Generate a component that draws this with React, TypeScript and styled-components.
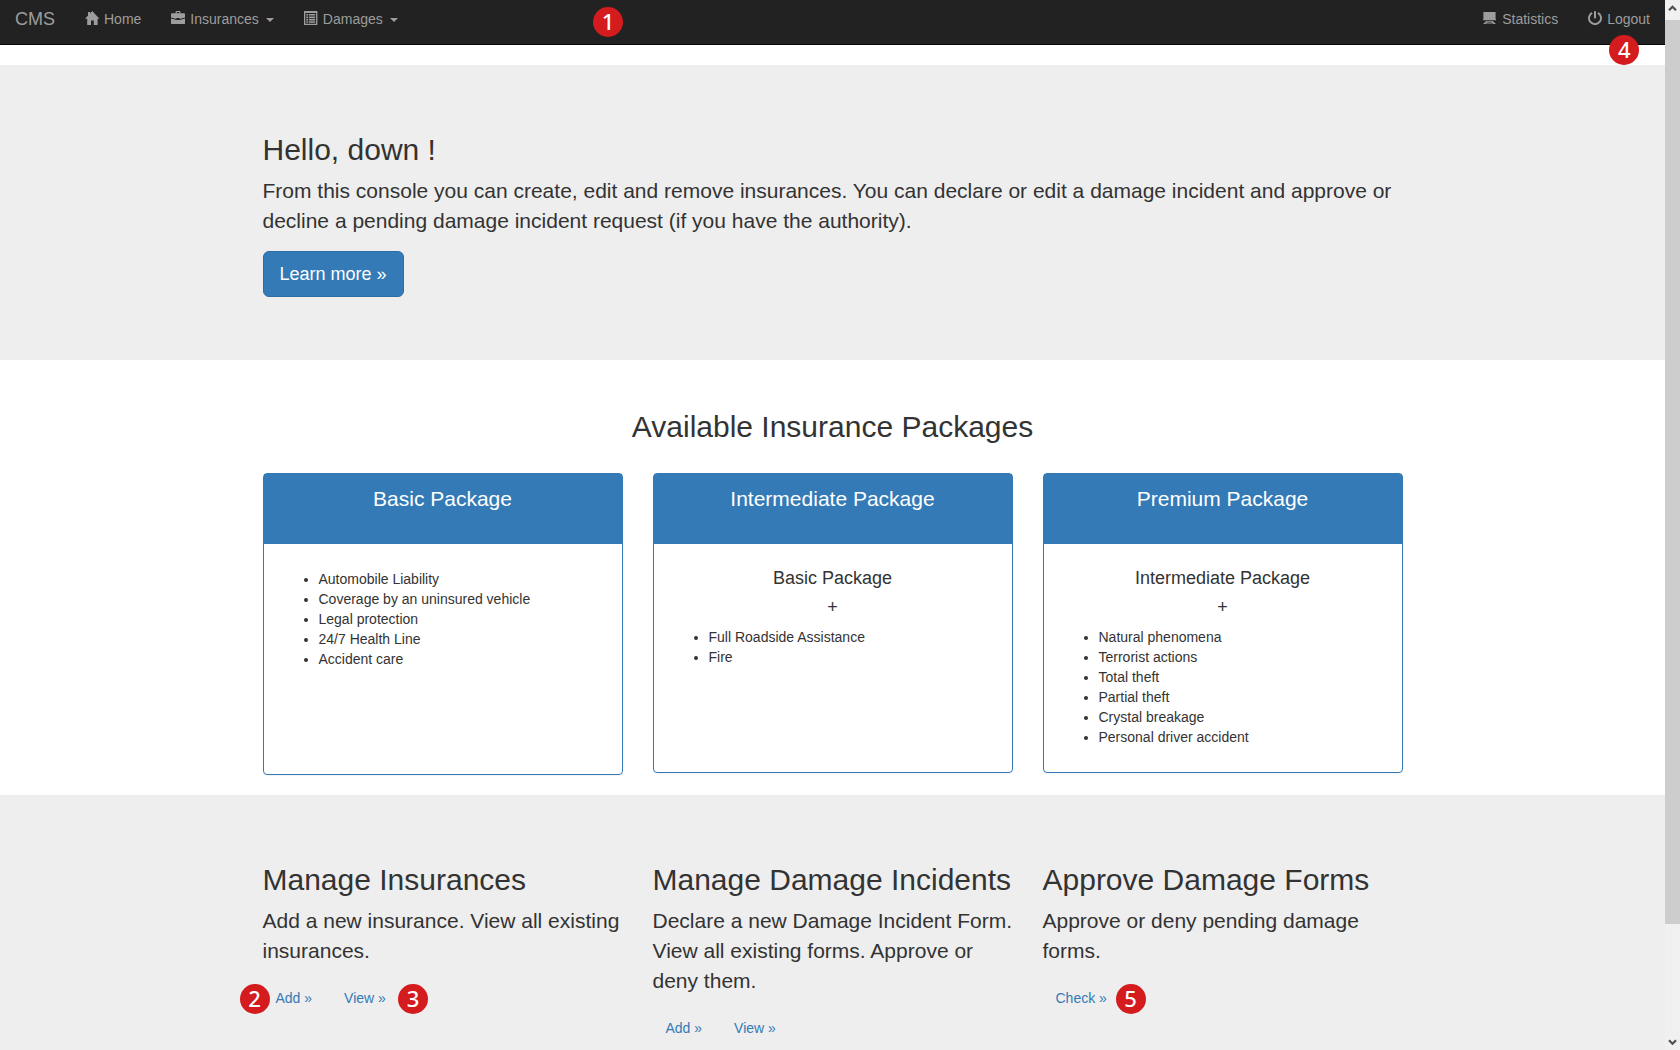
import React from "react";
import styled, { createGlobalStyle } from "styled-components";

const GlobalStyle = createGlobalStyle`
  *, *::before, *::after { box-sizing: border-box; }
  body {
    margin: 0;
    background: #fff;
    color: #333;
    font-family: "Liberation Sans", Arial, sans-serif;
    font-size: 14px;
    line-height: 20px;
  }
`;

const Window = styled.div`
  display: flex;
  height: 100vh;
`;

const Page = styled.div`
  flex: 1;
  min-width: 0;
  overflow-y: auto;
  scrollbar-width: none;
`;

const Scrollbar = styled.div`
  display: flex;
  flex-direction: column;
  flex: none;
  width: 15px;
  background: #f0f0f0;
`;

const ScrollArrow = styled.button`
  display: flex;
  align-items: center;
  justify-content: center;
  height: 16px;
  padding: 0;
  border: 0;
  background: transparent;
  color: #505050;
`;

const ScrollTrack = styled.div`
  display: flex;
  flex-direction: column;
  flex: 1;
  padding-top: 4px;
`;

const ScrollThumb = styled.div`
  height: 89.2%;
  background: #cdcdcd;
`;

const Navbar = styled.nav`
  position: relative;
  display: flex;
  justify-content: space-between;
  height: 45px;
  margin-bottom: 20px;
  background: #222;
  border-bottom: 1px solid #080808;
`;

const NavGroup = styled.div`
  display: flex;
`;

const Brand = styled.a`
  padding: 9px 15px;
  color: #9d9d9d;
  font-size: 18px;
  text-decoration: none;
`;

const NavLink = styled.a`
  position: relative;
  display: flex;
  align-items: flex-start;
  gap: 5px;
  padding: 9px 15px;
  color: #9d9d9d;
  text-decoration: none;
`;

const NavIcon = styled.svg`
  width: 14px;
  height: 14px;
  margin-top: 2px;
  fill: currentColor;
`;

const Caret = styled.span`
  margin-top: 9px;
  margin-left: 2px;
  border: 4px solid transparent;
  border-top-color: currentColor;
  border-bottom: 0;
`;

const Marker = styled.span<{ $left?: string; $top?: string }>`
  position: absolute;
  top: ${(p) => p.$top ?? "3px"};
  left: ${(p) => p.$left ?? "100%"};
  width: 30px;
  height: 30px;
  border-radius: 50%;
  background: #d41b1d;
  color: #fff;
  font: 500 22px/28px "Noto Sans", sans-serif;
  text-align: center;
`;

const Jumbotron = styled.section`
  padding: 68px 0 63px;
  background: #eee;
`;

const Container = styled.div`
  max-width: 1170px;
  margin: 0 auto;
  padding: 0 15px;
`;

const Columns = styled.div`
  display: grid;
  grid-template-columns: repeat(3, minmax(0, 1fr));
  align-items: start;
  gap: 30px;
`;

const Heading = styled.h2`
  margin: 0 0 10px;
  font-size: 30px;
  font-weight: 400;
  line-height: 33px;
`;

const Lead = styled.p`
  margin: 0 0 15px;
  font-size: 21px;
  line-height: 30px;
`;

const PrimaryButton = styled.a`
  display: inline-block;
  vertical-align: top;
  padding: 10px 16px;
  border: 1px solid #2e6da4;
  border-radius: 6px;
  background: #337ab7;
  color: #fff;
  font-size: 18px;
  line-height: 24px;
  text-decoration: none;
`;

const Packages = styled.section`
  padding: 50px 0 20px;
`;

const PackagesTitle = styled(Heading)`
  margin-bottom: 30px;
  text-align: center;
`;

const Card = styled.article<{ $tall?: boolean }>`
  min-height: ${(p) => (p.$tall ? 302 : 300)}px;
  border: 1px solid #337ab7;
  border-radius: 4px;
  box-shadow: 0 1px 1px rgba(0, 0, 0, 0.05);
`;

const CardHeader = styled.h3`
  margin: 0;
  padding: 10px 15px 30px;
  background: #337ab7;
  color: #fff;
  font-size: 21px;
  font-weight: 400;
  line-height: 30px;
  text-align: center;
`;

const CardBody = styled.div`
  padding: 25px 15px;
`;

const CardSubtitle = styled.h4`
  margin: 0 0 10px;
  font-size: 18px;
  font-weight: 400;
  line-height: 19px;
  text-align: center;
`;

const Coverage = styled.ul`
  margin: 0;
  padding-left: 40px;
`;

const Actions = styled.div`
  display: flex;
  gap: 6px;
`;

const LinkButton = styled.a`
  position: relative;
  padding: 7px 13px;
  color: #337ab7;
  text-decoration: none;
`;

const packages = [
  {
    name: "Basic Package",
    items: [
      "Automobile Liability",
      "Coverage by an uninsured vehicle",
      "Legal protection",
      "24/7 Health Line",
      "Accident care",
    ],
  },
  {
    name: "Intermediate Package",
    base: "Basic Package",
    items: ["Full Roadside Assistance", "Fire"],
  },
  {
    name: "Premium Package",
    base: "Intermediate Package",
    items: [
      "Natural phenomena",
      "Terrorist actions",
      "Total theft",
      "Partial theft",
      "Crystal breakage",
      "Personal driver accident",
    ],
  },
];

const tasks = [
  {
    title: "Manage Insurances",
    text: "Add a new insurance. View all existing insurances.",
    actions: [
      { label: "Add »", marker: 2, left: "-23px" },
      { label: "View »", marker: 3, left: "67px" },
    ],
  },
  {
    title: "Manage Damage Incidents",
    text: "Declare a new Damage Incident Form. View all existing forms. Approve or deny them.",
    actions: [{ label: "Add »" }, { label: "View »" }],
  },
  {
    title: "Approve Damage Forms",
    text: "Approve or deny pending damage forms.",
    actions: [{ label: "Check »", marker: 5, left: "73px" }],
  },
] as {
  title: string;
  text: string;
  actions: { label: string; marker?: number; left?: string }[];
}[];

const HomeIcon = () => (
  <NavIcon viewBox="0 0 14 14" aria-hidden="true">
    <path d="M7.2 0 L14.4 7.8 H12.6 V14 H8.8 V9.4 H6 V14 H2.2 V7.8 H0 L3 4.5 V1 H5 V2.4 Z" />
  </NavIcon>
);

const BriefcaseIcon = () => (
  <NavIcon viewBox="0 0 14 14" aria-hidden="true">
    <path
      fillRule="evenodd"
      d="M4.6 2.2 V1 Q4.6 0 5.6 0 H8.4 Q9.4 0 9.4 1 V2.2 H13 Q14 2.2 14 3.2 V6.6 L8.6 8 V6.9 H5.4 V8 L0 6.6 V3.2 Q0 2.2 1 2.2 Z M5.8 1.1 V2.2 H8.2 V1.1 Z"
    />
    <path d="M0 7.6 L5.4 9 H8.6 L14 7.6 V12.4 Q14 13 13.2 13 H0.8 Q0 13 0 12.4 Z" />
  </NavIcon>
);

const ListIcon = () => (
  <NavIcon viewBox="0 0 14 14" aria-hidden="true">
    <path
      fillRule="evenodd"
      d="M0.4 0 H13 Q13.4 0 13.4 0.4 V13.6 Q13.4 14 13 14 H0.4 Q0 14 0 13.6 V0.4 Q0 0 0.4 0 Z M1.3 2 V12.8 H12.1 V2 Z"
    />
    <path d="M2.3 3 H4 V4.6 H2.3 Z M4.8 3 H11.2 V4.6 H4.8 Z M2.3 5.4 H4 V7 H2.3 Z M4.8 5.4 H11.2 V7 H4.8 Z M2.3 7.8 H4 V9.4 H2.3 Z M4.8 7.8 H11.2 V9.4 H4.8 Z M2.3 10.2 H4 V11.8 H2.3 Z M4.8 10.2 H11.2 V11.8 H4.8 Z" />
  </NavIcon>
);

const BoardIcon = () => (
  <NavIcon viewBox="0 0 14 14" aria-hidden="true">
    <path d="M0.4 1 H12.6 V8.2 H13 V9.2 H0 V8.2 H0.4 Z" />
    <path
      fillRule="evenodd"
      d="M3.4 10 H9.6 L13 13 H10.6 L9.6 12.4 H3.4 L2.4 13 H0 Z M4.6 10.8 L3.8 11.5 H9.2 L8.4 10.8 Z"
    />
  </NavIcon>
);

const PowerIcon = () => (
  <NavIcon viewBox="0 0 14 14" aria-hidden="true">
    <path
      d="M4.1 1.9 A6 6 0 1 0 9.9 1.9"
      fill="none"
      stroke="currentColor"
      strokeWidth="1.9"
    />
    <rect x="6" y="0" width="2" height="7.4" rx="0.6" />
  </NavIcon>
);

const Chevron = ({ down }: { down?: boolean }) => (
  <svg width="9" height="7" viewBox="0 0 9 7" aria-hidden="true">
    <path
      d={down ? "M1 1.2 L4.5 4.7 L8 1.2" : "M1 5.2 L4.5 1.7 L8 5.2"}
      fill="none"
      stroke="currentColor"
      strokeWidth="2.2"
    />
  </svg>
);

export default function App() {
  return (
    <Window>
      <GlobalStyle />
      <Page>
        <Navbar>
          <NavGroup>
            <Brand href="#">CMS</Brand>
            <NavLink href="#home">
              <HomeIcon />
              Home
            </NavLink>
            <NavLink href="#insurances">
              <BriefcaseIcon />
              Insurances
              <Caret />
            </NavLink>
            <NavLink href="#damages">
              <ListIcon />
              Damages
              <Caret />
            </NavLink>
          </NavGroup>
          <Marker $left="593px" $top="7px">1</Marker>
          <NavGroup>
            <NavLink href="#statistics">
              <BoardIcon />
              Statistics
            </NavLink>
            <NavLink href="#logout">
              <PowerIcon />
              Logout
              <Marker $left="36px" $top="35px">4</Marker>
            </NavLink>
          </NavGroup>
        </Navbar>

        <Jumbotron>
          <Container>
            <Heading>Hello, down !</Heading>
            <Lead>
              From this console you can create, edit and remove insurances. You can declare or edit
              a damage incident and approve or decline a pending damage incident request (if you
              have the authority).
            </Lead>
            <PrimaryButton href="#learn">Learn more »</PrimaryButton>
          </Container>
        </Jumbotron>

        <Packages>
          <Container>
            <PackagesTitle>Available Insurance Packages</PackagesTitle>
            <Columns>
              {packages.map((pack) => (
                <Card key={pack.name} $tall={!pack.base}>
                  <CardHeader>{pack.name}</CardHeader>
                  <CardBody>
                    {pack.base && (
                      <>
                        <CardSubtitle>{pack.base}</CardSubtitle>
                        <CardSubtitle>+</CardSubtitle>
                      </>
                    )}
                    <Coverage>
                      {pack.items.map((item) => (
                        <li key={item}>{item}</li>
                      ))}
                    </Coverage>
                  </CardBody>
                </Card>
              ))}
            </Columns>
          </Container>
        </Packages>

        <Jumbotron>
          <Container>
            <Columns>
              {tasks.map((task) => (
                <div key={task.title}>
                  <Heading>{task.title}</Heading>
                  <Lead>{task.text}</Lead>
                  <Actions>
                    {task.actions.map((action) => (
                      <LinkButton key={action.label} href="#task">
                        {action.label}
                        {action.marker && <Marker $left={action.left}>{action.marker}</Marker>}
                      </LinkButton>
                    ))}
                  </Actions>
                </div>
              ))}
            </Columns>
          </Container>
        </Jumbotron>
      </Page>
      <Scrollbar>
        <ScrollArrow type="button" aria-label="Scroll up">
          <Chevron />
        </ScrollArrow>
        <ScrollTrack>
          <ScrollThumb />
        </ScrollTrack>
        <ScrollArrow type="button" aria-label="Scroll down">
          <Chevron down />
        </ScrollArrow>
      </Scrollbar>
    </Window>
  );
}
